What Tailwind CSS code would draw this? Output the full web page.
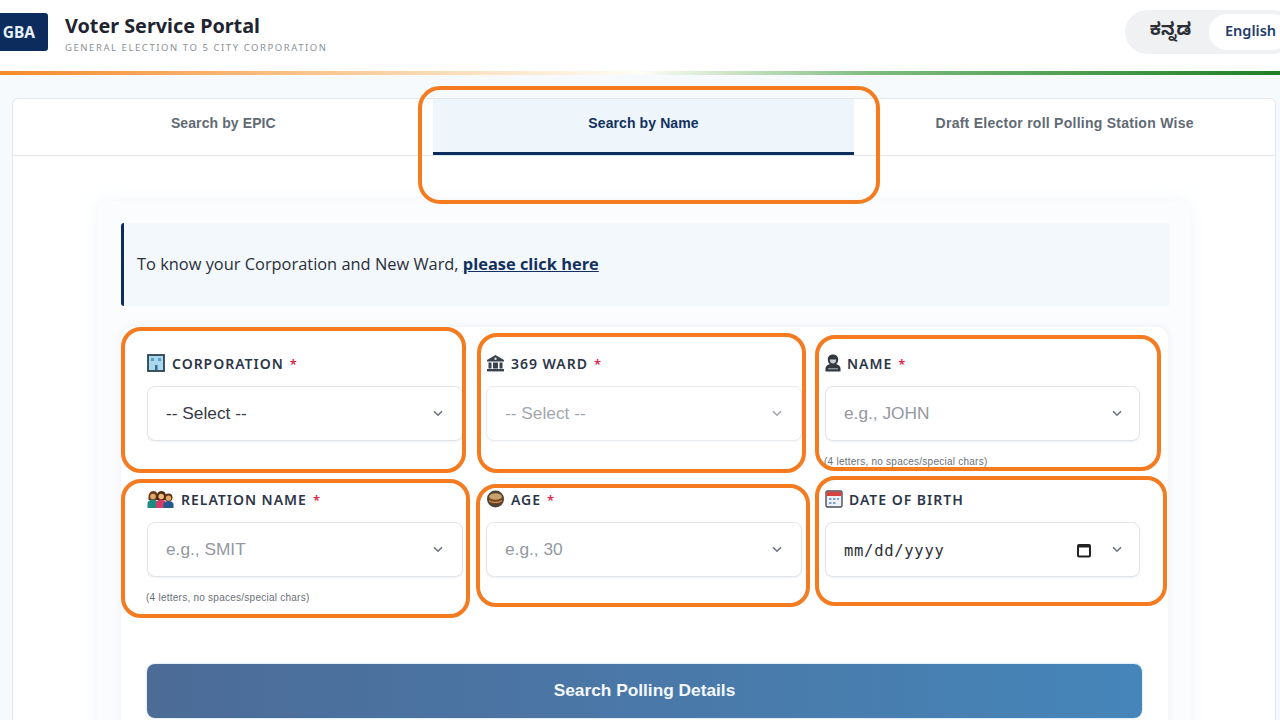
<!DOCTYPE html>
<html lang="en">
<head>
<meta charset="utf-8">
<title>Voter Service Portal</title>
<script src="https://cdn.jsdelivr.net/npm/@tailwindcss/browser@4"></script>
</head>
<body class="font-['Liberation_Sans',sans-serif]">
<div class="relative w-[1280px] h-[720px] overflow-hidden bg-[#f7fafc]">
  <header class="h-[71px] bg-white flex items-center">
    <div class="w-[60px] h-[38px] -ml-[12px] mt-[-7px] bg-[#0d2c5e] rounded-[3px] flex items-center justify-end pr-[13px] pt-[2px] text-[#e8f0fa] font-['Noto_Sans',sans-serif] font-bold text-[15.5px]">GBA</div>
    <div class="ml-[17px] mt-[-5px]">
      <div class="font-['Noto_Sans',sans-serif] font-bold text-[19.8px] leading-[26px] text-[#1f2430]">Voter Service Portal</div>
      <div class="mt-[2px] font-['Noto_Sans',sans-serif] text-[9.5px] leading-[13px] tracking-[1.56px] text-[#8b9198]">GENERAL ELECTION TO 5 CITY CORPORATION</div>
    </div>
    <div class="ml-auto -mr-[14px] mt-[-7px] h-[44px] w-[169px] rounded-full bg-[#f0f1f2] flex items-center pl-[7px]">
      <div class="w-[77px] pt-[3px] text-center font-['Noto_Sans_Kannada','Noto_Sans',sans-serif] font-bold text-[17.5px] text-[#2b2f36]">ಕನ್ನಡ</div>
      <div class="w-[81px] h-[36px] rounded-full bg-white flex items-center pl-[16px] pb-[2px] font-['Noto_Sans',sans-serif] font-semibold text-[14.5px] text-[#1d3c6e]">English</div>
    </div>
  </header>
  <div class="h-[4px] bg-[linear-gradient(90deg,#f58a2a_0%,#fbd9b0_33%,#fffdf8_50%,#7fbc7f_68%,#1f7f24_100%)]"></div>

  <main class="pl-[12px] pr-[4px] pt-[23px]">
    <section class="bg-white border border-[#e4e7ea] rounded-t-[6px] h-[640px]">
      <nav class="grid grid-cols-3 h-[57px] border-b border-[#e4e7ea] text-[14px] font-bold text-[#626a74] text-center">
        <div class="flex items-center justify-center pb-[7px] tracking-[0.1px]">Search by EPIC</div>
        <div class="flex items-center justify-center pb-[5px] -ml-px bg-[#eef5fb] border-b-[3px] border-[#0d2c5e] text-[#12305f] h-[56px] tracking-[0.1px]">Search by Name</div>
        <div class="flex items-center justify-center pb-[7px] tracking-[0.26px]">Draft Elector roll Polling Station Wise</div>
      </nav>

      <div class="ml-[84px] mt-[45px] w-[1093px] bg-[#fbfcfe] rounded-t-[12px] px-[24px] pt-[22px] shadow-[0_0_16px_rgba(226,234,242,0.55)] h-[540px]">
        <div class="w-[1049px] h-[83px] bg-[#f3f8fd] border-l-[3px] border-[#0d2c5e] rounded-[3px] flex items-center pl-[13px] font-['Open_Sans',sans-serif] text-[16.4px] text-[#2a2f38]">
          <span>To know your Corporation and New Ward,&nbsp;</span><a class="font-bold underline text-[#12305f]">please click here</a>
        </div>

        <div class="mt-[21px] w-[1047px] bg-white rounded-t-[12px] px-[26px] pt-[25px] h-[420px] shadow-[0_0_10px_rgba(226,234,242,0.6)]">
          <div class="grid grid-cols-[316px_316px_315px] gap-x-[23px] gap-y-[24px]">

            <div class="h-[112px]">
              <label class="flex items-center h-[22px] font-['Noto_Sans',sans-serif] font-semibold text-[14px] tracking-[0.98px] text-[#2c3648]">
                <svg class="w-[18px] h-[18px] mr-[7px]" viewBox="0 0 18 18"><rect x="1" y="1" width="16" height="16" fill="#a9d8ee" stroke="#2b4254" stroke-width="1.8"/><rect x="4" y="4" width="3" height="3" fill="#5b9fc4"/><rect x="11" y="4" width="3" height="3" fill="#5b9fc4"/><rect x="8" y="11" width="2.5" height="5" fill="#3a6f8c"/></svg>
                CORPORATION<span class="ml-[6px] pt-[3px] text-[#e0244a] text-[13px]">*</span>
              </label>
              <div class="mt-[12px] h-[55px] bg-white border border-[#e1e5ea] rounded-[8px] flex items-center pl-[18px] pr-[19px] text-[17.3px] text-[#343a44] shadow-[0_1px_2px_rgba(30,50,80,0.08)]">
                <span class="pt-[1px]">-- Select --</span>
                <svg class="ml-auto w-[10px] h-[7px]" viewBox="0 0 10 7" fill="none" stroke="#6b7280" stroke-width="1.6"><path d="M1 1.2 5 5.2 9 1.2"/></svg>
              </div>
            </div>

            <div class="h-[112px]">
              <label class="flex items-center h-[22px] font-['Noto_Sans',sans-serif] font-semibold text-[14px] tracking-[0.98px] text-[#2c3648]">
                <svg class="w-[19px] h-[18px] mr-[6px]" viewBox="0 0 19 18" fill="#39424c"><path d="M9.5 1 18 6v1.5H1V6z"/><rect x="2.5" y="8.5" width="3" height="6"/><rect x="13.5" y="8.5" width="3" height="6"/><rect x="7" y="8.5" width="5" height="6"/><rect x="1" y="15" width="17" height="2.4"/><circle cx="9.5" cy="4.8" r="1.2" fill="#d7dce0"/></svg>
                369 WARD<span class="ml-[6px] pt-[3px] text-[#e0244a] text-[13px]">*</span>
              </label>
              <div class="mt-[12px] h-[55px] bg-white border border-[#e8ebef] rounded-[8px] flex items-center pl-[18px] pr-[19px] text-[17.3px] text-[#a3a7ad] shadow-[0_1px_2px_rgba(30,50,80,0.05)]">
                <span class="pt-[1px]">-- Select --</span>
                <svg class="ml-auto w-[10px] h-[7px]" viewBox="0 0 10 7" fill="none" stroke="#a0a5ac" stroke-width="1.6"><path d="M1 1.2 5 5.2 9 1.2"/></svg>
              </div>
            </div>

            <div class="h-[112px]">
              <label class="flex items-center h-[22px] font-['Noto_Sans',sans-serif] font-semibold text-[14px] tracking-[0.98px] text-[#2c3648]">
                <svg class="w-[16px] h-[18px] mr-[6px]" viewBox="0 0 16 18"><path d="M8 .5c3.4 0 5.2 2.300 5.200 5 0 2-.8 3.600-2 4.700 2.500.5 4.300 2 4.300 4.300V17.500H.5V14.500c0-2.300 1.800-3.800 4.300-4.300-1.200-1.100-2-2.700-2-4.700C2.800 2.800 4.600.5 8 .5z" fill="#33383e"/><path d="M4.800 5.500h6.400c.1 2.400-1.300 4-3.200 4s-3.300-1.600-3.200-4z" fill="#c9ced2"/><rect x="3" y="14" width="10" height="1.400" fill="#8b9197"/></svg>
                NAME<span class="ml-[6px] pt-[3px] text-[#e0244a] text-[13px]">*</span>
              </label>
              <div class="mt-[12px] h-[55px] bg-white border border-[#e1e5ea] rounded-[8px] flex items-center pl-[18px] pr-[17px] text-[17.3px] text-[#94989f] shadow-[0_1px_2px_rgba(30,50,80,0.08)]">
                <span>e.g., JOHN</span>
                <svg class="ml-auto w-[10px] h-[7px]" viewBox="0 0 10 7" fill="none" stroke="#6b7280" stroke-width="1.6"><path d="M1 1.2 5 5.2 9 1.2"/></svg>
              </div>
              <p class="mt-[15px] -ml-[1px] text-[10px] tracking-[0.25px] leading-[11px] text-[#6a7078]">(4 letters, no spaces/special chars)</p>
            </div>

            <div class="h-[112px]">
              <label class="flex items-center h-[22px] font-['Noto_Sans',sans-serif] font-semibold text-[14px] tracking-[0.98px] text-[#2c3648]">
                <svg class="w-[27px] h-[19px] mr-[7px]" viewBox="0 0 27 19"><path d="M1.500 10C1 4 3 1 6.500 1S11 4 10.500 10z" fill="#6b3a18"/><circle cx="6" cy="6.500" r="2.800" fill="#e3a868"/><path d="M.5 18v-4c0-3 2.500-4.500 5.500-4.500s4.500 1.500 4.500 4.500v4z" fill="#1f8a80"/><path d="M9.500 10c-.5-6 1.500-9 5-9s5 3 4.500 9z" fill="#4a2a12"/><circle cx="14.200" cy="6.500" r="2.800" fill="#f0b878"/><path d="M9 18v-4.500c0-2.500 2.500-4 5-4s5 1.500 5 4V18z" fill="#d43d6a"/><circle cx="21.500" cy="7.500" r="4" fill="#5a3414"/><circle cx="21.500" cy="8.200" r="2.600" fill="#e3a868"/><path d="M16.500 18v-3.500c0-2 2.500-3.500 5-3.500s5 1.500 5 3.500V18z" fill="#24588f"/></svg>
                RELATION NAME<span class="ml-[6px] pt-[3px] text-[#e0244a] text-[13px]">*</span>
              </label>
              <div class="mt-[12px] h-[55px] bg-white border border-[#e1e5ea] rounded-[8px] flex items-center pl-[18px] pr-[19px] text-[17.3px] text-[#94989f] shadow-[0_1px_2px_rgba(30,50,80,0.08)]">
                <span>e.g., SMIT</span>
                <svg class="ml-auto w-[10px] h-[7px]" viewBox="0 0 10 7" fill="none" stroke="#6b7280" stroke-width="1.6"><path d="M1 1.2 5 5.2 9 1.2"/></svg>
              </div>
              <p class="mt-[15px] -ml-[1px] text-[10px] tracking-[0.25px] leading-[11px] text-[#6a7078]">(4 letters, no spaces/special chars)</p>
            </div>

            <div class="h-[112px]">
              <label class="flex items-center h-[22px] font-['Noto_Sans',sans-serif] font-semibold text-[14px] tracking-[0.98px] text-[#2c3648]">
                <svg class="w-[19px] h-[18px] mr-[6px]" viewBox="0 0 19 18"><circle cx="9.500" cy="9" r="8.500" fill="#4d4136"/><ellipse cx="9.500" cy="6.800" rx="6.500" ry="3.600" fill="#c9a26b"/><path d="M3 7.500c2 3 11 3 13 0v4.500c-2 3-11 3-13 0z" fill="#7d431d"/><path d="M3 10.500c2 2.500 11 2.500 13 0" stroke="#d0b078" fill="none"/></svg>
                AGE<span class="ml-[6px] pt-[3px] text-[#e0244a] text-[13px]">*</span>
              </label>
              <div class="mt-[12px] h-[55px] bg-white border border-[#e1e5ea] rounded-[8px] flex items-center pl-[18px] pr-[19px] text-[17.3px] text-[#94989f] shadow-[0_1px_2px_rgba(30,50,80,0.08)]">
                <span>e.g., 30</span>
                <svg class="ml-auto w-[10px] h-[7px]" viewBox="0 0 10 7" fill="none" stroke="#6b7280" stroke-width="1.6"><path d="M1 1.2 5 5.2 9 1.2"/></svg>
              </div>
            </div>

            <div class="h-[112px]">
              <label class="flex items-center h-[22px] font-['Noto_Sans',sans-serif] font-semibold text-[14px] tracking-[0.98px] text-[#2c3648]">
                <svg class="w-[18px] h-[18px] mr-[6px]" viewBox="0 0 18 18"><rect x="1" y="1" width="16" height="16" rx="1.500" fill="#eef2f6" stroke="#4a4f55" stroke-width="1.400"/><rect x="1.700" y="1.700" width="14.600" height="4.300" fill="#d8433f"/><g fill="#7fa3c9"><rect x="4" y="8" width="2.500" height="2"/><rect x="8" y="8" width="2.500" height="2"/><rect x="12" y="8" width="2" height="2"/><rect x="4" y="12" width="2.500" height="2"/><rect x="8" y="12" width="2.500" height="2"/></g></svg>
                DATE OF BIRTH
              </label>
              <div class="mt-[12px] h-[55px] bg-white border border-[#e1e5ea] rounded-[8px] flex items-center pl-[18px] pr-[17px] font-['DejaVu_Sans_Mono',monospace] text-[15.500px] text-[#2c2f35] shadow-[0_1px_2px_rgba(30,50,80,0.08)]">
                <span class="tracking-[0.72px] pt-[4px]">mm/dd/yyyy</span>
                <svg class="ml-auto w-[16px] h-[16px]" viewBox="0 0 16 16" fill="none" stroke="#222" stroke-width="2"><rect x="2" y="3" width="12" height="11.500" rx="1"/><rect x="2" y="3" width="12" height="2.500" fill="#222" stroke="none"/></svg>
                <svg class="ml-[20px] w-[10px] h-[7px]" viewBox="0 0 10 7" fill="none" stroke="#6b7280" stroke-width="1.6"><path d="M1 1.200 5 5.200 9 1.200"/></svg>
              </div>
            </div>
          </div>

          <button class="mt-[64px] w-[995px] h-[54px] rounded-[8px] bg-gradient-to-r from-[#4c6b97] to-[#4585b9] text-[#f4f8fc] font-bold text-[17.3px] shadow-[0_0_2px_rgba(100,150,200,0.6)]">Search Polling Details</button>
        </div>
      </div>
    </section>
  </main>

  <div class="absolute left-[418px] top-[86px] w-[462px] h-[118px] border-[4px] border-[#f47b20] rounded-[22px]"></div>
  <div class="absolute left-[121px] top-[327px] w-[345px] h-[146px] border-[4px] border-[#f47b20] rounded-[20px]"></div>
  <div class="absolute left-[477px] top-[333px] w-[329px] h-[140px] border-[4px] border-[#f47b20] rounded-[20px]"></div>
  <div class="absolute left-[815px] top-[335px] w-[346px] h-[136px] border-[4px] border-[#f47b20] rounded-[20px]"></div>
  <div class="absolute left-[121px] top-[479px] w-[349px] h-[139px] border-[4px] border-[#f47b20] rounded-[20px]"></div>
  <div class="absolute left-[476px] top-[484px] w-[334px] h-[123px] border-[4px] border-[#f47b20] rounded-[20px]"></div>
  <div class="absolute left-[815px] top-[476px] w-[352px] h-[130px] border-[4px] border-[#f47b20] rounded-[20px]"></div>
</div>
</body>
</html>
